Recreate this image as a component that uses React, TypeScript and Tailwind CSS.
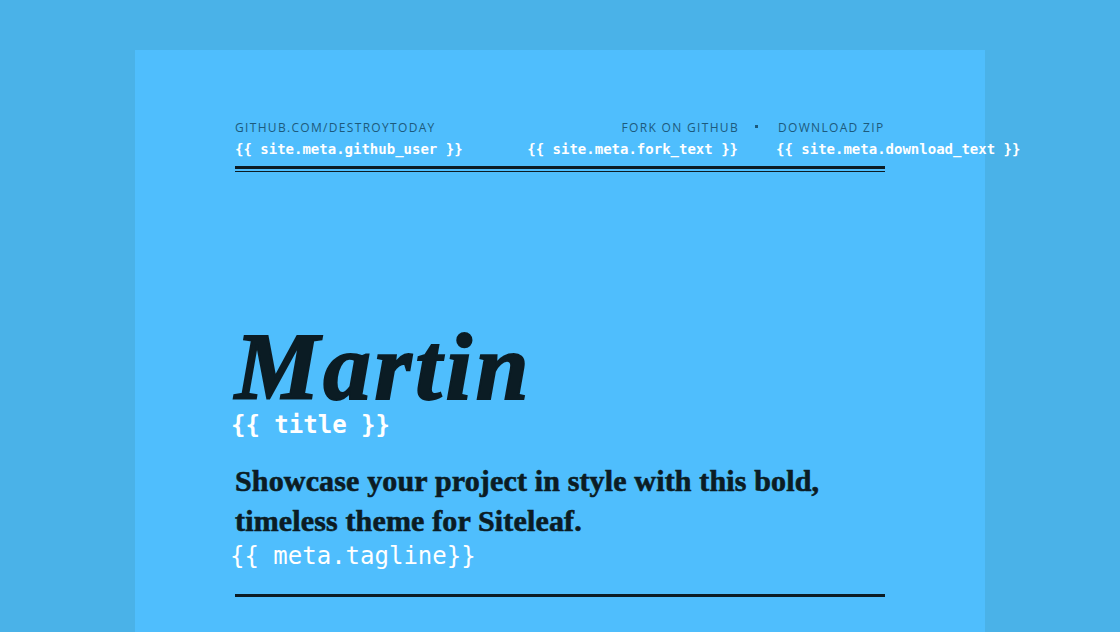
import React from 'react'

const mono = "font-['DejaVu_Sans_Mono',monospace]"
const label =
  "text-[12px] leading-4 uppercase tracking-[0.11em] text-[#1d5a7c] font-['Open_Sans',sans-serif] whitespace-nowrap"

export default function App() {
  return (
    <div className="min-h-screen w-full bg-[#4ab2e8] pt-[50px] overflow-hidden">
      <div className="mx-auto w-[850px] h-[600px] bg-[#4fbefd] px-[100px] pt-[70px]">
        {/* Header */}
        <header className="flex justify-between">
          <div className="flex flex-col">
            <span className={label}>github.com/destroytoday</span>
            <span className={`${mono} mt-[3px] text-[14px] leading-5 font-bold text-white whitespace-nowrap`}>
              {'{{ site.meta.github_user }}'}
            </span>
          </div>
          <div className="flex items-start">
            <div className="flex flex-col items-end">
              <span className={`${label} -mr-[1px]`}>Fork on Github</span>
              <span className={`${mono} mt-[3px] text-[14px] leading-5 font-bold text-white whitespace-nowrap`}>
                {'{{ site.meta.fork_text }}'}
              </span>
            </div>
            <span className="mt-[5px] ml-[17px] mr-[20px] w-[3px] h-[3px] bg-[#1d5a7c]" />
            <div className="flex flex-col w-[107px]">
              <span className={label}>Download Zip</span>
              <span className={`${mono} mt-[3px] -ml-[2px] text-[14px] leading-5 font-bold text-white whitespace-nowrap`}>
                {'{{ site.meta.download_text }}'}
              </span>
            </div>
          </div>
        </header>
        <div className="mt-[7px] h-[3px] bg-[#0b1c24]" />
        <div className="mt-[2px] h-px bg-[#0b1c24]" />

        {/* Title */}
        <h1 className="mt-[157px] text-[95px] leading-[76px] font-bold italic text-[#0b1c24] font-['Liberation_Serif',serif] tracking-[0.04em] [-webkit-text-stroke:2px_#0b1c24]">
          Martin
        </h1>
        <div className={`${mono} -ml-[4px] mt-[6px] text-[24px] leading-7 font-bold text-white`}>
          {'{{ title }}'}
        </div>

        {/* Tagline */}
        <p className="mt-[22px] text-[30px] leading-[40px] font-bold text-[#0b1c24] font-['Liberation_Serif',serif] tracking-[0.005em] [-webkit-text-stroke:0.6px_#0b1c24]">
          Showcase your project in style with this bold,
          <br />
          timeless theme for Siteleaf.
        </p>
        <div className={`${mono} -ml-[5px] mt-[1px] text-[24px] leading-7 text-white`}>
          {'{{ meta.tagline}}'}
        </div>

        <div className="mt-[24px] h-[3px] bg-[#0b1c24]" />
      </div>
    </div>
  )
}
